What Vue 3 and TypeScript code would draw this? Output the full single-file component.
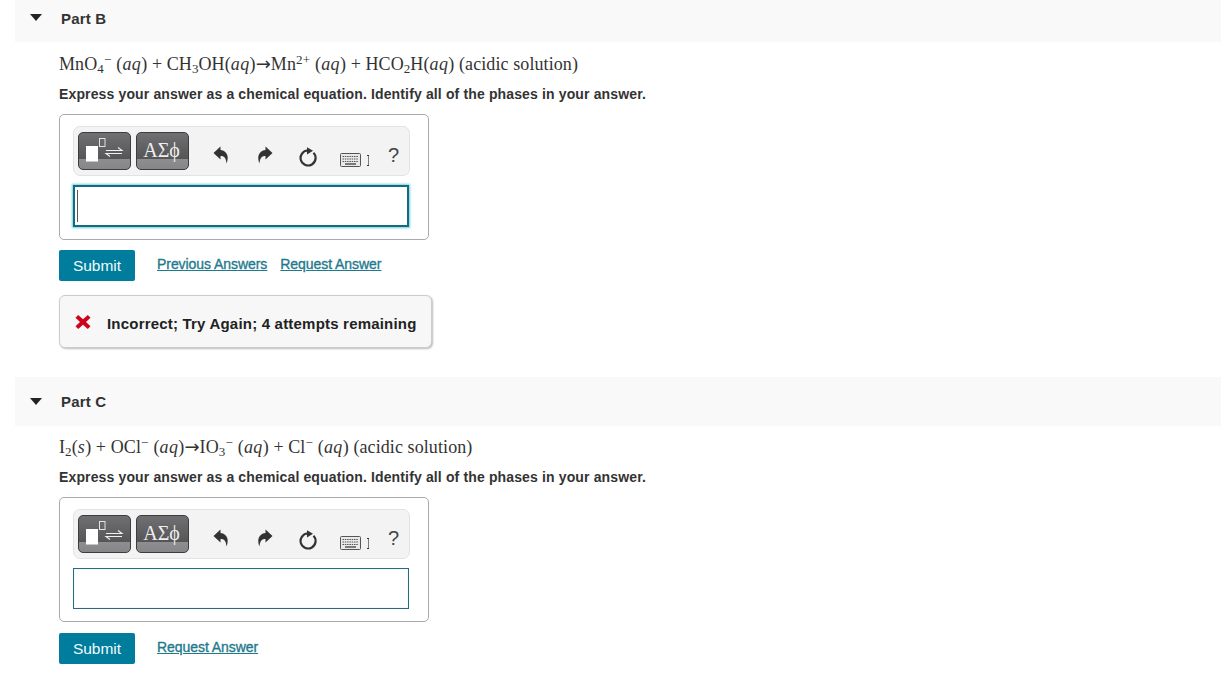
<script setup lang="ts">
interface Seg { t: string; k?: 'i' | 'sub' | 'sup' | 'arrow' }
interface Part {
  name: string
  eq: Seg[]
  focused: boolean
  links: string[]
  feedback?: string
}
const parts: Part[] = [
  {
    name: 'Part B',
    focused: true,
    links: ['Previous Answers', 'Request Answer'],
    feedback: 'Incorrect; Try Again; 4 attempts remaining',
    eq: [
      { t: 'MnO' }, { t: '4', k: 'sub' }, { t: '−', k: 'sup' }, { t: '(' }, { t: 'aq', k: 'i' }, { t: ') + CH' },
      { t: '3', k: 'sub' }, { t: 'OH(' }, { t: 'aq', k: 'i' }, { t: ')' }, { t: '→', k: 'arrow' }, { t: 'Mn' }, { t: '2+', k: 'sup' }, { t: '(' },
      { t: 'aq', k: 'i' }, { t: ') + HCO' }, { t: '2', k: 'sub' }, { t: 'H(' }, { t: 'aq', k: 'i' }, { t: ') (acidic solution)' },
    ],
  },
  {
    name: 'Part C',
    focused: false,
    links: ['Request Answer'],
    eq: [
      { t: 'I' }, { t: '2', k: 'sub' }, { t: '(' }, { t: 's', k: 'i' }, { t: ') + OCl' }, { t: '−', k: 'sup' }, { t: '(' },
      { t: 'aq', k: 'i' }, { t: ')' }, { t: '→', k: 'arrow' }, { t: 'IO' }, { t: '3', k: 'sub' }, { t: '−', k: 'sup' }, { t: '(' }, { t: 'aq', k: 'i' },
      { t: ') + Cl' }, { t: '−', k: 'sup' }, { t: '(' }, { t: 'aq', k: 'i' }, { t: ') (acidic solution)' },
    ],
  },
]
</script>

<template>
  <div class="page">
    <section v-for="p in parts" :key="p.name" class="part">
      <header class="head">
        <span class="tri"></span>
        <span class="title">{{ p.name }}</span>
      </header>
      <div class="body">
        <p class="eq">
          <template v-for="(s, i) in p.eq" :key="i">
            <sub v-if="s.k === 'sub'">{{ s.t }}</sub>
            <sup v-else-if="s.k === 'sup'">{{ s.t }}</sup>
            <i v-else-if="s.k === 'i'">{{ s.t }}</i>
            <span v-else-if="s.k === 'arrow'" class="arrow">{{ s.t }}</span>
            <span v-else>{{ s.t }}</span>
          </template>
        </p>
        <p class="hint">Express your answer as a chemical equation. Identify all of the phases in your answer.</p>

        <div class="editor">
          <div class="toolbar">
            <button class="tbtn" type="button" aria-label="Templates">
              <svg width="53" height="38" viewBox="0 0 53 38">
                <rect x="8" y="14" width="12" height="15.500" fill="#fff" />
                <rect x="21.500" y="6.500" width="5.500" height="8" fill="none" stroke="#e2e2e2" />
                <path d="M28 18.500h16l-4-3M44 21.500H28l4 3" fill="none" stroke="#f0f0f0" stroke-width="1.100" />
              </svg>
            </button>
            <button class="tbtn greek" type="button">ΑΣϕ</button>
            <svg class="ic undo" width="16" height="18" viewBox="0 0 16 18">
              <path d="M7.500 .5 .5 7l7 6.500V10c3.500 0 5.500 1.500 6 7.500 2.500-6 1.500-12.500-6-13.500z" fill="#333" />
            </svg>
            <svg class="ic redo" width="16" height="18" viewBox="0 0 16 18">
              <path d="M8.500 .5l7 6.500-7 6.500V10c-3.500 0-5.500 1.500-6 7.500-2.500-6-1.500-12.500 6-13.500z" fill="#333" />
            </svg>
            <svg class="ic reload" width="19" height="20" viewBox="0 0 19 20">
              <path d="M8.500 3.500a7.500 7.500 0 1 0 6 2.300" fill="none" stroke="#333" stroke-width="2.200" />
              <path d="M8 .2 14 3.800 8 7.400z" fill="#333" />
            </svg>
            <svg class="ic kbd" width="29" height="14" viewBox="0 0 29 14">
              <rect x="0.500" y="0.500" width="20" height="13" rx="1" fill="#e9e9e9" stroke="#555" />
              <path d="M2.500 3.500h16M2.500 6h16M2.500 8.500h16" stroke="#555" stroke-dasharray="1.500 .8" />
              <path d="M5 11h11" stroke="#555" stroke-width="1.500" />
              <path d="M27 2.500h2v10h-2" fill="none" stroke="#333" stroke-width="1.200" />
            </svg>
            <span class="help">?</span>
          </div>
          <div class="input" :class="{ focused: p.focused }">
            <span v-if="p.focused" class="caret"></span>
          </div>
        </div>

        <div class="actions">
          <button class="submit" type="button">Submit</button>
          <div class="links">
            <a v-for="l in p.links" :key="l" href="#">{{ l }}</a>
          </div>
        </div>

        <div v-if="p.feedback" class="feedback">
          <svg width="16" height="16" viewBox="0 0 16 16">
            <path d="M3.200 1 8 5.300 12.800 1 15.500 3.700 11 8l4.500 4.300-2.700 2.700L8 10.700 3.200 15 .5 12.300 5 8 .5 3.700z" fill="#d0021b" />
          </svg>
          <span class="fb-text">{{ p.feedback }}</span>
        </div>
      </div>
    </section>
  </div>
</template>

<style>
html, body { margin: 0; background: #fff; overflow: hidden; }
</style>

<style scoped>
.page {
  padding-left: 15px;
  margin-top: -7px;
  font-family: "Liberation Sans", Arial, sans-serif;
  color: #222;
}
.part { padding-bottom: 29px; }
.part:first-child .body { padding-top: 1px; }
.part:last-child .actions { margin-top: 11px; }
.part:last-child .title { margin-top: -1px; }
.head {
  height: 49px;
  background: #f9f9f9;
  display: flex;
  align-items: center;
  padding-left: 15px;
}
.tri {
  width: 0;
  height: 0;
  border-left: 6.500px solid transparent;
  border-right: 6.500px solid transparent;
  border-top: 7px solid #222;
}
.title {
  margin-left: 19px;
  margin-top: 1px;
  font-size: 15px;
  font-weight: bold;
  letter-spacing: .2px;
  color: #333;
}
.body { padding-left: 44px; }
.eq {
  margin: 9px 0 0;
  height: 24px;
  line-height: 24px;
  font-family: "Liberation Serif", serif;
  font-size: 18px;
  letter-spacing: .09px;
  color: #333;
  white-space: nowrap;
}
.eq i { letter-spacing: .4px; }
.eq sub, .eq sup { font-size: 13px; line-height: 0; }
.eq sub { vertical-align: -3px; }
.eq sup { vertical-align: 6px; margin-right: 5px; }
.arrow { font-family: "DejaVu Sans", sans-serif; font-size: 18px; }
.hint {
  margin: 10px 0 0;
  height: 17px;
  line-height: 17px;
  font-size: 14px;
  font-weight: bold;
  letter-spacing: .14px;
  color: #333;
  white-space: nowrap;
}
.editor {
  box-sizing: border-box;
  width: 370px;
  margin-top: 11px;
  padding: 11px 18px 12px 13px;
  border: 1px solid #aaa;
  border-radius: 5px;
  background: #fff;
}
.toolbar {
  box-sizing: border-box;
  width: 337px;
  height: 50px;
  display: flex;
  align-items: center;
  padding-left: 4px;
  background: #f3f3f3;
  border: 1px solid #e3e3e3;
  border-radius: 7px;
}
.tbtn {
  box-sizing: border-box;
  width: 53px;
  height: 38px;
  padding: 0;
  margin-right: 5px;
  border: 1px solid #3d3d3f;
  border-radius: 5px;
  background: linear-gradient(#707072 0, #555557 73%, #8e8e90 73%, #868688 100%);
  overflow: hidden;
  display: block;
}
.tbtn svg { display: block; margin: -1px; }
.greek {
  font-family: "Liberation Serif", serif;
  font-size: 20px;
  line-height: 32px;
  padding: 0 2px 2px 0;
  color: #eee;
}
.ic { flex: none; }
.undo { margin-left: 19px; margin-top: 8px; }
.redo { margin-left: 28px; margin-top: 8px; }
.reload { margin-left: 26px; margin-top: 11px; }
.kbd { margin-left: 22px; margin-top: 17px; }
.help {
  margin-left: 19px;
  margin-top: 9px;
  font-size: 20px;
  color: #444;
}
.input {
  box-sizing: border-box;
  position: relative;
  width: 336px;
  height: 41px;
  margin-top: 9px;
  border: 1px solid #2b6a78;
  box-shadow: inset 0 0 0 1px #f0fbfd;
  background: #fff;
}
.input.focused {
  height: 42px;
  border: 2px solid #17697f;
  box-shadow: 0 0 2px 1px #6fd0dc;
}
.caret {
  position: absolute;
  left: 2px;
  top: 3px;
  width: 1px;
  height: 32px;
  background: #555;
}
.actions {
  display: flex;
  align-items: flex-start;
  margin-top: 10px;
}
.submit {
  width: 76px;
  height: 31px;
  padding: 0;
  border: 0;
  border-radius: 2px;
  background: #007c9c;
  color: #f1fbfd;
  font-family: "Liberation Sans", Arial, sans-serif;
  font-size: 15.500px;
  font-weight: normal;
}
.links {
  display: flex;
  gap: 13px;
  margin-left: 22px;
  margin-top: 6px;
}
.links a {
  font-size: 14px;
  letter-spacing: -.06px;
  -webkit-text-stroke: .35px #1f7a8e;
  line-height: 16px;
  color: #1f7a8e;
}
.feedback {
  box-sizing: border-box;
  display: flex;
  align-items: center;
  gap: 16px;
  width: 373px;
  height: 53px;
  margin-top: 14px;
  padding-left: 15px;
  border: 1px solid #ccc;
  border-radius: 6px;
  background: #f7f7f7;
  box-shadow: 1px 1px 2px #bbb;
  font-size: 15px;
  font-weight: bold;
  letter-spacing: .2px;
  color: #222;
  white-space: nowrap;
}
.fb-text { margin-top: 4px; }
</style>
